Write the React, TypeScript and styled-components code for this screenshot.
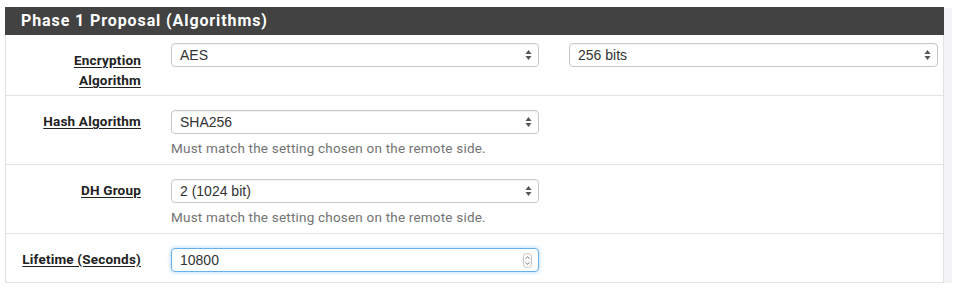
import styled, { createGlobalStyle } from "styled-components";

const Global = createGlobalStyle`
  body {
    margin: 0;
    background: #ffffff;
    font-family: Roboto, "Liberation Sans", sans-serif;
  }
`;

const Panel = styled.div`
  margin: 7px 0 0 5px;
  width: 939px;
  background: #ffffff;
  border: 1px solid #e2e2e2;
  border-top: none;
  box-sizing: border-box;
  box-shadow: 4px 5px 0 4px #f3f3f5, 0 6px 6px -2px rgba(0, 0, 0, 0.06);
`;

const Heading = styled.div`
  height: 28px;
  margin: 0 -1px;
  background: #424242;
  color: #ffffff;
  font-weight: 700;
  font-size: 16px;
  letter-spacing: 0.9px;
  line-height: 28px;
  padding-left: 16px;
`;

const Row = styled.div<{ $pt: number; $pb: number; $last?: boolean }>`
  display: flex;
  align-items: flex-start;
  padding: ${(p) => p.$pt}px 0 ${(p) => p.$pb}px;
  border-bottom: ${(p) => (p.$last ? "none" : "1px solid #e3e3e3")};
`;

const Label = styled.div<{ $pt: number }>`
  width: 150px;
  flex-shrink: 0;
  box-sizing: border-box;
  padding: ${(p) => p.$pt}px 15px 0 0;
  text-align: right;
  font-weight: 700;
  font-size: 13.5px;
  letter-spacing: 0.2px;
  line-height: 20px;
  color: #222222;

  span {
    text-decoration: underline;
    text-underline-offset: 2px;
  }
`;

const Field = styled.div`
  margin-left: 15px;
  width: 368px;
  display: flex;
  flex-direction: column;
`;

const Box = styled.div<{ $focus?: boolean }>`
  position: relative;
  height: 24px;
  box-sizing: border-box;
  border: 1px solid ${(p) => (p.$focus ? "#66afe9" : "#c8c8c8")};
  border-radius: 4px;
  background: #ffffff;
  box-shadow: ${(p) =>
    p.$focus ? "0 0 4px rgba(102, 175, 233, 0.55)" : "inset 0 1px 1px rgba(0,0,0,0.04)"};
  font-family: "Liberation Sans", Arial, sans-serif;
  font-size: 14px;
  color: #333333;
  line-height: 22px;
  padding-left: 8px;
  display: flex;
  align-items: center;
  justify-content: space-between;
  padding-right: 6px;
`;

const Help = styled.div`
  margin-top: 6px;
  font-size: 13.5px;
  letter-spacing: 0.2px;
  color: #737373;
  line-height: 16px;
`;

const Second = styled(Field)`
  margin-left: 30px;
  width: 369px;
`;

const Arrows = () => (
  <svg width="7" height="12" viewBox="0 0 7 12">
    <path d="M3.5 1 L6.5 5 L0.5 5 Z" fill="#555" />
    <path d="M3.5 11 L6.5 7 L0.5 7 Z" fill="#555" />
  </svg>
);

const Spinner = () => (
  <svg width="9" height="15" viewBox="0 0 9 15">
    <rect x="0.5" y="0.5" width="8" height="14" rx="3" fill="#fafafa" stroke="#c9c9c9" />
    <path d="M2.6 5.6 L4.5 3.8 L6.4 5.6" fill="none" stroke="#666" strokeWidth="0.9" />
    <path d="M2.6 9.4 L4.5 11.2 L6.4 9.4" fill="none" stroke="#666" strokeWidth="0.9" />
  </svg>
);

const Select = ({ value }: { value: string }) => (
  <Box>
    {value}
    <Arrows />
  </Box>
);

const HELP = "Must match the setting chosen on the remote side.";

export default function App() {
  return (
    <>
      <Global />
      <Panel>
        <Heading>Phase 1 Proposal (Algorithms)</Heading>
        <Row $pt={8} $pb={5}>
          <Label $pt={7}>
            <span>Encryption</span>
            <br />
            <span>Algorithm</span>
          </Label>
          <Field>
            <Select value="AES" />
          </Field>
          <Second>
            <Select value="256 bits" />
          </Second>
        </Row>
        <Row $pt={14} $pb={8}>
          <Label $pt={1}>
            <span>Hash Algorithm</span>
          </Label>
          <Field>
            <Select value="SHA256" />
            <Help>{HELP}</Help>
          </Field>
        </Row>
        <Row $pt={14} $pb={8}>
          <Label $pt={1}>
            <span>DH Group</span>
          </Label>
          <Field>
            <Select value="2 (1024 bit)" />
            <Help>{HELP}</Help>
          </Field>
        </Row>
        <Row $pt={14} $pb={10} $last>
          <Label $pt={1}>
            <span>Lifetime (Seconds)</span>
          </Label>
          <Field>
            <Box $focus>
              10800
              <Spinner />
            </Box>
          </Field>
        </Row>
      </Panel>
    </>
  );
}
